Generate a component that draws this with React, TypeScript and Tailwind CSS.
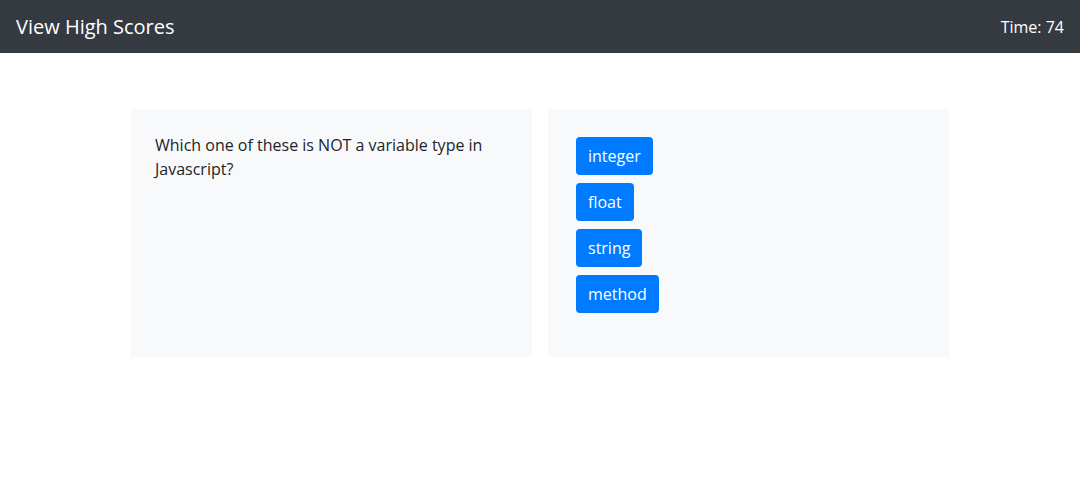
const answers = ["integer", "float", "string", "method"];

export default function App() {
  return (
    <div className="min-h-[494px] bg-white font-['Segoe_UI','Open_Sans','Noto_Sans',sans-serif] text-[#212529]">
      <nav className="flex h-[53px] items-center justify-between bg-[#343a40] px-4">
        <a href="#" className="text-[20px] leading-[30px] text-white">
          View High Scores
        </a>
        <span className="text-[16px] text-white">Time: 74</span>
      </nav>

      <main className="mx-auto mt-14 flex w-[818px] gap-4">
        <section className="h-[248px] w-[401px] bg-[#f8f9fa] px-6 py-6">
          <p className="text-[16px] leading-6">
            Which one of these is NOT a variable type in Javascript?
          </p>
        </section>
        <section className="flex h-[248px] w-[401px] flex-col items-start gap-2 bg-[#f8f9fa] px-7 py-7">
          {answers.map((a) => (
            <button
              key={a}
              className="h-[38px] rounded-[4px] bg-[#007bff] px-3 text-[16px] leading-6 text-white"
            >
              {a}
            </button>
          ))}
        </section>
      </main>
    </div>
  );
}
